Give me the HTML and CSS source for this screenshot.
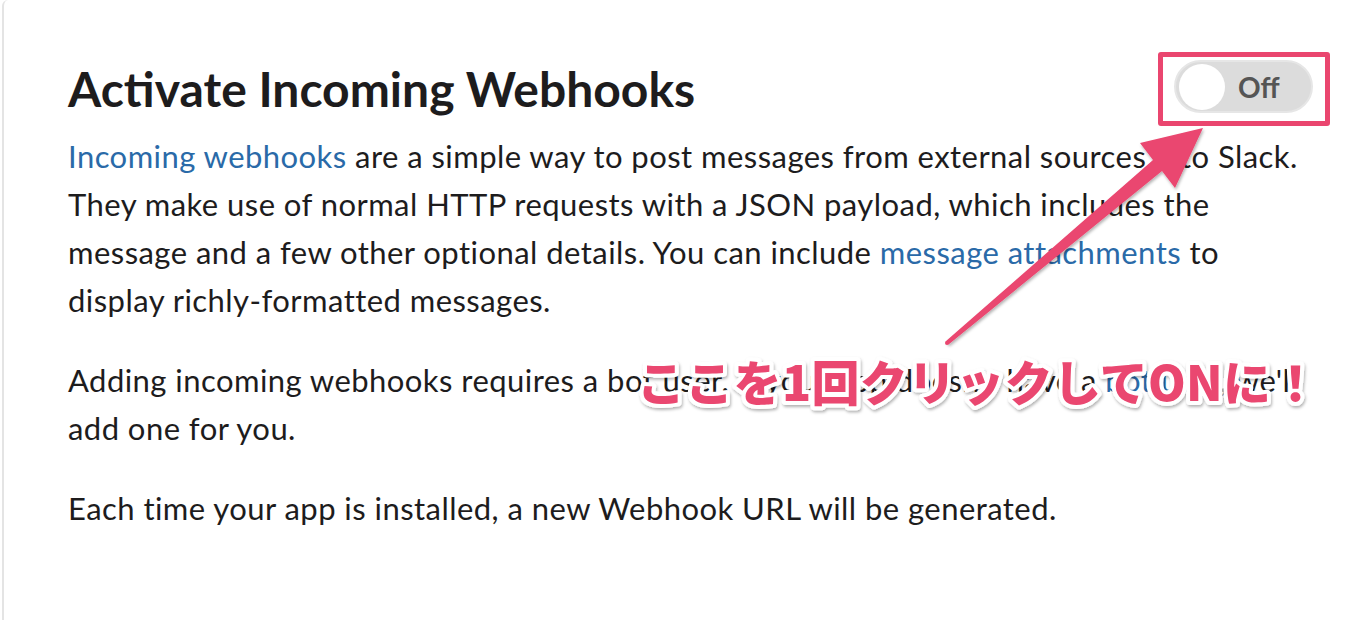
FILE: index.html
```html
<!DOCTYPE html>
<html>

  <head>

    <meta charset="utf-8">

    <title> Incoming Webhooks </title>

    <link rel="stylesheet" href="styles.css">

  </head>

  <body>

    <div class="card">
      <div class="card-head">
        <h2 class="title">Activate Incoming Webhooks</h2>
        <div class="callout-box">
          <div class="toggle">
            <span class="knob"></span>
            <span class="toggle-label">Off</span>
          </div>
        </div>
      </div>

      <p class="text">
        <a href="#">Incoming webhooks</a> are a simple way to post messages from external sources into Slack.
        They make use of normal HTTP requests with a JSON payload, which includes the message and a few other
        optional details. You can include <a href="#">message attachments</a> to display richly-formatted messages.
      </p>

      <p class="text">
        Adding incoming webhooks requires a bot user. If your app doesn't have a <a href="#">bot user</a>, we'll
        add one for you.
      </p>

      <p class="text">
        Each time your app is installed, a new Webhook URL will be generated.
      </p>
    </div>

    <!-- annotation drawn over the screenshot -->
    <svg class="overlay" width="1364" height="620" viewBox="0 0 1364 620">
      <defs>
        <filter id="shade" x="-10%" y="-10%" width="130%" height="130%">
          <feDropShadow dx="1" dy="2" stdDeviation="1.5" flood-color="#000" flood-opacity="0.3"/>
        </filter>
      </defs>
      <polygon class="arrow" filter="url(#shade)"
        points="945.5,341.5 1153,160 1140,143 1203,128 1175,188 1162,171 948.5,344.5"/>
      <circle class="arrow" cx="947" cy="343" r="2"/>
      <text class="note" x="637" y="401" filter="url(#shade)">ここを1回クリックしてONに！</text>
    </svg>

  </body>

</html>
```

FILE: styles.css
```css
body, html {
    margin: 0;
    padding: 0;
    overflow: hidden;
    background: #fff;
}
body {
    font-family: Lato, "Noto Sans", sans-serif;
    color: #1d1c1d;
}
.card {
    margin-left: 2px;
    border-left: 2px solid #e4e4e4;
    border-top-left-radius: 6px;
    min-height: 620px;
    padding: 0 34px 0 64px;
    box-sizing: border-box;
}
.card-head {
    display: flex;
    flex-direction: row;
    justify-content: space-between;
    align-items: center;
    padding-top: 52px;
    margin-bottom: 6px;
}
.title {
    margin: 0;
    font-size: 48px;
    font-weight: 700;
    line-height: 74px;
}
.callout-box {
    border: 5px solid #ea466f;
    border-radius: 3px;
    padding: 3px 12px 8px 11px;
}
.toggle {
    display: flex;
    align-items: center;
    width: 139px;
    height: 53px;
    box-sizing: border-box;
    border: 2px solid #e6e6e6;
    border-radius: 27px;
    background: #dcdcdc;
    padding-left: 3px;
}
.knob {
    width: 46px;
    height: 46px;
    border-radius: 50%;
    background: #fff;
}
.toggle-label {
    margin-left: 13px;
    font-size: 28px;
    font-weight: 700;
    color: #555;
}
.text {
    margin: 0 0 32px 0;
    font-size: 31px;
    letter-spacing: 0.45px;
    line-height: 48px;
    max-width: 1238px;
}
.text a {
    color: #2a6aa8;
    text-decoration: none;
}
.overlay {
    position: absolute;
    left: 0;
    top: 0;
    pointer-events: none;
}
.arrow {
    fill: #ea466f;
}
.note {
    font-family: "Noto Sans CJK JP", sans-serif;
    font-weight: 900;
    font-size: 48px;
    letter-spacing: 0.3px;
    fill: #ea466f;
    stroke: #fff;
    stroke-width: 8px;
    stroke-linejoin: round;
    paint-order: stroke;
}
```
